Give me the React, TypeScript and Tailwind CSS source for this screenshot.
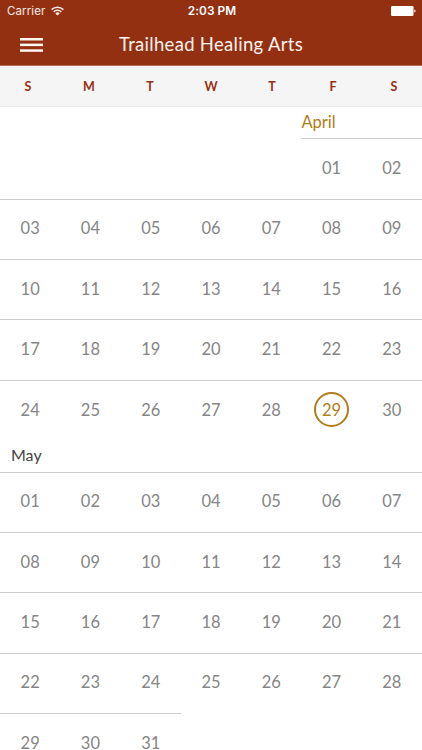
const weekdays = ['S', 'M', 'T', 'W', 'T', 'F', 'S'];

const TODAY = { month: 'April', day: 29 };

const months = [
  { name: 'April', firstWeekday: 5, days: 30 },
  { name: 'May', firstWeekday: 0, days: 31 },
];

function getWeeks(firstWeekday: number, days: number) {
  const cells: (number | null)[] = [
    ...Array.from({ length: firstWeekday }, () => null),
    ...Array.from({ length: days }, (_, i) => i + 1),
  ];
  const weeks: (number | null)[][] = [];
  for (let i = 0; i < cells.length; i += 7) {
    weeks.push(cells.slice(i, i + 7));
  }
  return weeks;
}

function StatusBar() {
  return (
    <div className="grid h-[22px] grid-cols-3 items-center pl-[7px] pr-[6px] leading-none text-white">
      <div className="flex items-center gap-[6px] font-['Inter',sans-serif] text-[11.5px] tracking-[0.1px] text-white/90">
        <span className="pt-[1px]">Carrier</span>
        <svg width="13" height="10" viewBox="0 0 13 10" fill="none" stroke="currentColor" strokeWidth="1.5" aria-hidden="true">
          <path d="M0.6 3.6a8.4 8.4 0 0 1 11.8 0" />
          <path d="M2.7 5.9a5.4 5.4 0 0 1 7.6 0" />
          <path d="M6.5 9.6 4.3 7.4a3.1 3.1 0 0 1 4.4 0z" fill="currentColor" stroke="none" />
        </svg>
      </div>
      <div className="pt-[2px] pl-[1px] text-center font-['Inter',sans-serif] text-[11.8px] font-semibold tracking-[0.1px]">2:03 PM</div>
      <svg className="justify-self-end" width="25" height="10" viewBox="0 0 25 10" fill="currentColor" aria-hidden="true">
        <rect width="22.5" height="10" rx="1.2" />
        <path d="M23.3 3.4c1.7.3 1.7 2.9 0 3.2z" />
      </svg>
    </div>
  );
}

function Header() {
  return (
    <header className="h-[66px] shrink-0 border-b border-[#b56c58] bg-[#943012]">
      <StatusBar />
      <div className="grid h-[44px] grid-cols-[54px_1fr_54px] items-center">
        <button type="button" aria-label="Open menu" className="ml-5 w-[23px] pt-[2px]">
          <svg className="block" width="23" height="14" viewBox="0 0 23 14" fill="#fdf6f2" aria-hidden="true">
            <rect width="23" height="2.5" />
            <rect y="5.6" width="23" height="2.5" />
            <rect y="11.3" width="23" height="2.5" />
          </svg>
        </button>
        <h1 className="pt-[2px] text-center text-[18.5px] tracking-[0.3px] whitespace-nowrap text-[#fdf3ee]">Trailhead Healing Arts</h1>
      </div>
    </header>
  );
}

function Week({ week, month }: { week: (number | null)[]; month: string }) {
  return (
    <div className="grid h-[60.4px] shrink-0 grid-cols-7">
      {week.map((day, i) =>
        day === null ? (
          <span key={i} />
        ) : (
          <div key={i} className="flex items-center justify-center border-t border-[#cecece] pb-[2px] leading-none text-[#858585]">
            {month === TODAY.month && day === TODAY.day ? (
              <span className="flex size-[35px] items-center justify-center rounded-full border-2 border-[#b07d1a] pt-[1px] text-[#b07d1a]">
                {day}
              </span>
            ) : (
              <span className="h-[14px] leading-[14px]">{String(day).padStart(2, '0')}</span>
            )}
          </div>
        )
      )}
    </div>
  );
}

export default function App() {
  return (
    <div className="flex h-[750px] w-[422px] flex-col overflow-hidden bg-white font-['Lato',sans-serif] text-[16.5px]">
      <Header />
      <div className="h-[41px] shrink-0 overflow-hidden border-b border-[#e9e9e9] bg-[#f5f5f5]">
        <div className="-mx-[2.5px] grid h-full grid-cols-7 items-center pt-[2px] text-center text-[12.5px] font-bold text-[#943012]">
          {weekdays.map((d, i) => (
            <span key={i}>{d}</span>
          ))}
        </div>
      </div>
      <main className="flex shrink-0 flex-col">
        {months.map((m) => (
          <section key={m.name}>
            <div className="grid h-[31.3px] grid-cols-7 items-center">
              {m.firstWeekday > 0 ? (
                <h2 className="col-start-6 text-[16.5px] text-[#b07d1a]">{m.name}</h2>
              ) : (
                <h2 className="pb-[2px] pl-[11px] text-[16px] text-[#444444]">{m.name}</h2>
              )}
            </div>
            {getWeeks(m.firstWeekday, m.days).map((week, i) => (
              <Week key={i} week={week} month={m.name} />
            ))}
          </section>
        ))}
      </main>
    </div>
  );
}
